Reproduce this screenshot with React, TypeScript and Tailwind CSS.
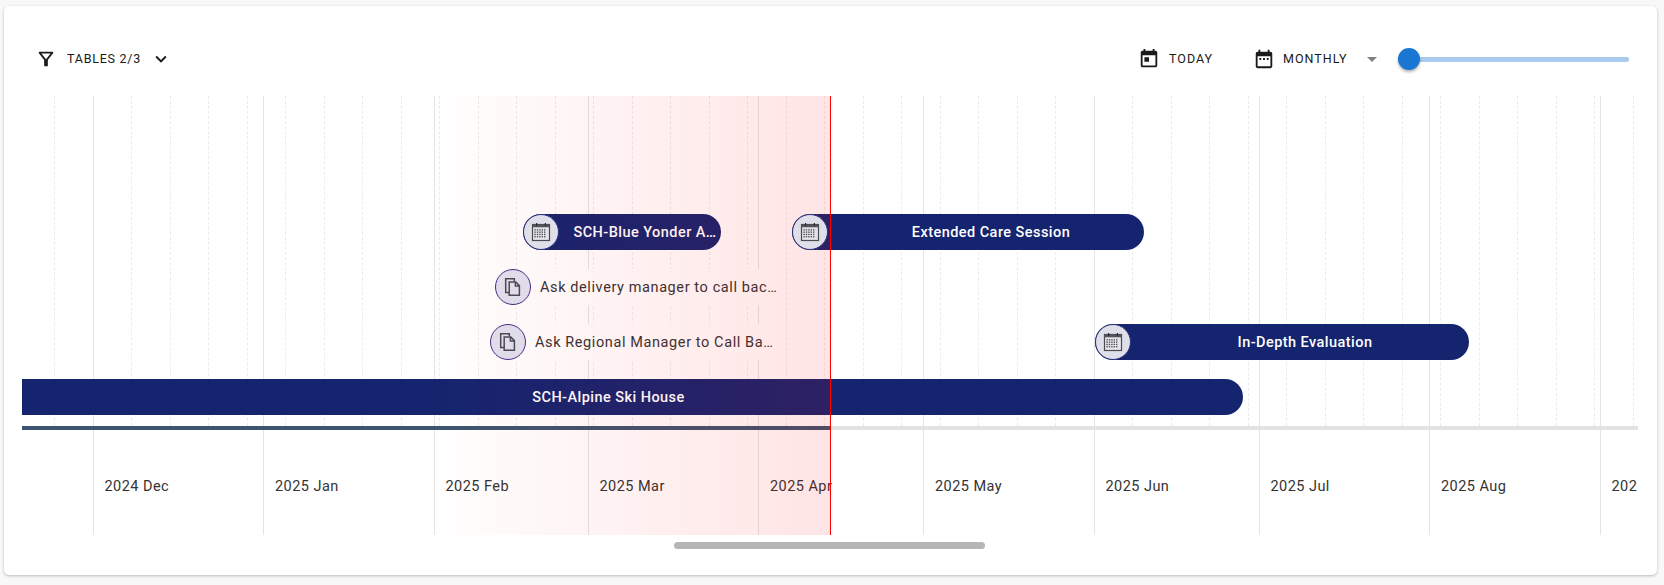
const DAY = 5.5;

const months = [
  { label: '', days: 12.82 },
  { label: '2024 Dec', days: 31 },
  { label: '2025 Jan', days: 31 },
  { label: '2025 Feb', days: 28 },
  { label: '2025 Mar', days: 31 },
  { label: '2025 Apr', days: 30 },
  { label: '2025 May', days: 31 },
  { label: '2025 Jun', days: 30 },
  { label: '2025 Jul', days: 31 },
  { label: '2025 Aug', days: 31 },
  { label: '202', days: 30 },
];

const weekLines = Array.from({ length: 42 }, (_, i) => 32 + i * 38.5);

function CalendarGlyph() {
  const dots = [];
  for (let row = 0; row < 4; row++) {
    for (let col = 0; col < 5; col++) {
      dots.push(<rect key={`${row}-${col}`} x={3.4 + col * 2.4} y={7.2 + row * 2.3} width="1.4" height="1.3" fill="#4a4a52" />);
    }
  }
  return (
    <svg width="20" height="20" viewBox="0 0 20 20" fill="none">
      <rect x="1.5" y="2.5" width="17" height="16" fill="#e4e4ea" stroke="#4a4a50" strokeWidth="1.2" />
      <rect x="1.5" y="2.5" width="17" height="2.8" fill="#55555c" />
      <rect x="5" y="1" width="1.2" height="3" fill="#2c2c30" />
      <rect x="13.8" y="1" width="1.2" height="3" fill="#2c2c30" />
      {dots}
    </svg>
  );
}

function PagesGlyph() {
  return (
    <svg width="18" height="20" viewBox="0 0 18 20" fill="none" stroke="#4c4854" strokeWidth="1.5">
      <path d="M5 15.5H1.7V1.7h8.6v2.6" />
      <path d="M5.2 5h6.6l3.6 3.6v9.7H5.2z" fill="#e0dcea" />
      <path d="M11.4 5v4h4" />
    </svg>
  );
}

function Bar({ title, icon, className }: { title: string; icon?: boolean; className: string }) {
  return (
    <div className={`absolute h-[36px] flex items-center bg-[#15246f] text-white ${className}`}>
      {icon && (
        <span className="relative z-20 w-[36px] h-[36px] shrink-0 rounded-full border border-[#2b2f7c] bg-[#dfdfe9] flex items-center justify-center">
          <CalendarGlyph />
        </span>
      )}
      <span className="flex-1 min-w-0 pl-[14px] pr-1 pt-px text-center whitespace-nowrap text-[14.5px] font-medium tracking-[0.45px]">{title}</span>
    </div>
  );
}

function Task({ title, className }: { title: string; className: string }) {
  return (
    <div className={`absolute h-[36px] flex items-center gap-[9px] bg-white rounded-full ${className}`}>
      <span className="relative z-20 w-[36px] h-[36px] shrink-0 rounded-full border border-[#4b2a86] bg-[#e0dcea] flex items-center justify-center">
        <PagesGlyph />
      </span>
      <span className="flex-1 min-w-0 pt-px whitespace-nowrap text-[14.5px] tracking-[0.6px] text-[#333333]">{title}</span>
    </div>
  );
}

export default function App() {
  let x = 0;
  const monthLines = months.slice(1).map((_, i) => {
    x += months[i].days * DAY;
    return x;
  });

  return (
    <div className="w-[1664px] h-[585px] bg-[#f8f8f8] pt-[6px] pl-[4px] overflow-hidden font-['Roboto',sans-serif]">
      <div className="w-[1653px] h-[569px] bg-white rounded-[5px] shadow-[0_1px_3px_rgba(0,0,0,0.25)] flex flex-col">
        {/* Toolbar */}
        <div className="h-[90px] shrink-0 flex items-center justify-between pl-[31px] pr-[28px] pt-[16px] text-[12.5px] tracking-[0.75px] text-[#1a1a1a]">
          <div className="flex items-center">
            <svg width="22" height="22" viewBox="0 0 24 24" fill="#1a1a1a">
              <path d="M7 6h10l-5.01 6.3L7 6zm-2.75-.39C6.27 8.2 10 13 10 13v6c0 .55.45 1 1 1h2c.55 0 1-.45 1-1v-6s3.72-4.8 5.74-7.39c.51-.66.04-1.61-.79-1.61H5.04c-.83 0-1.3.95-.79 1.61z" />
            </svg>
            <span className="ml-[10px] w-[74px] whitespace-nowrap">TABLES 2/3</span>
            <svg className="ml-[9px]" width="22" height="22" viewBox="0 0 24 24" fill="#1a1a1a">
              <path d="M16.59 8.59 12 13.17 7.41 8.59 6 10l6 6 6-6z" />
            </svg>
          </div>
          <div className="flex items-center">
            <svg width="22" height="22" viewBox="0 0 24 24" fill="#1a1a1a">
              <path d="M19 3h-1V1h-2v2H8V1H6v2H5c-1.11 0-1.99.9-1.99 2L3 19c0 1.1.89 2 2 2h14c1.1 0 2-.9 2-2V5c0-1.1-.9-2-2-2zm0 16H5V8h14v11zM7 10h5v5H7z" />
            </svg>
            <span className="ml-[9px] w-[44px] tracking-[1px]">TODAY</span>
            <svg className="ml-[40px]" width="22" height="22" viewBox="0 0 24 24" fill="#1a1a1a">
              <path d="M9 11H7v2h2v-2zm4 0h-2v2h2v-2zm4 0h-2v2h2v-2zm2-7h-1V2h-2v2H8V2H6v2H5c-1.11 0-1.99.9-1.99 2L3 20c0 1.1.89 2 2 2h14c1.1 0 2-.9 2-2V6c0-1.1-.9-2-2-2zm0 16H5V9h14v11z" />
            </svg>
            <span className="ml-[8px] w-[65px] tracking-[1px] whitespace-nowrap">MONTHLY</span>
            <span className="ml-[19px] w-0 h-0 border-x-[5px] border-x-transparent border-t-[5px] border-t-[#808080]" />
            <div className="ml-[21px] relative w-[231px] h-[22px] flex items-center">
              <div className="w-full h-[5px] rounded-full bg-[#a9cbee]" />
              <div className="absolute left-0 top-0 w-[22px] h-[22px] rounded-full bg-[#1976d2] shadow-[0_2px_3px_rgba(0,0,0,0.3)]" />
            </div>
          </div>
        </div>

        {/* Timeline */}
        <div className="relative ml-[18px] w-[1616px] h-[439px] shrink-0 overflow-hidden">
          <div className="relative h-[330px]">
            {weekLines.map((left) => (
              <div key={left} className="absolute top-0 bottom-0 border-l border-dashed border-[#ececec]" style={{ left }} />
            ))}
            {monthLines.map((left) => (
              <div key={left} className="absolute top-0 bottom-0 border-l border-[#e4e4e4]" style={{ left }} />
            ))}
            <Bar title="SCH-Blue Yonder A…" icon className="left-[501px] top-[118px] w-[198px] rounded-full" />
            <Bar title="Extended Care Session" icon className="left-[770px] top-[118px] w-[352px] rounded-full" />
            <Task title="Ask delivery manager to call bac…" className="left-[473px] top-[173px] w-[283px]" />
            <Task title="Ask Regional Manager to Call Ba…" className="left-[468px] top-[228px] w-[285px]" />
            <Bar title="In-Depth Evaluation" icon className="left-[1073px] top-[228px] w-[374px] rounded-full" />
            <Bar title="SCH-Alpine Ski House" className="left-[-58px] top-[283px] w-[1279px] rounded-full" />
          </div>

          <div className="flex h-[4px] bg-[#e2e2e2]">
            <div className="w-[808px] bg-[#3d5570]" />
          </div>

          <div className="flex h-[105px]">
            {months.map((m, i) => (
              <div
                key={i}
                className={`shrink-0 flex items-center pt-[8px] pl-[11px] whitespace-nowrap text-[14.5px] tracking-[0.45px] text-[#333333] ${i > 0 ? 'border-l border-[#e4e4e4]' : ''}`}
                style={{ width: m.days * DAY }}
              >
                {m.label}
              </div>
            ))}
          </div>

          {/* Past range overlay and today marker */}
          <div className="absolute z-10 left-[400px] top-0 bottom-0 w-[408px] pointer-events-none bg-gradient-to-r from-[rgba(255,0,0,0)] to-[rgba(255,0,0,0.105)]" />
          <div className="absolute z-30 left-[808px] top-0 bottom-0 w-px bg-[#ff0000]" />
        </div>

        {/* Scrollbar */}
        <div className="mt-[7px] ml-[670px] w-[311px] h-[7px] rounded-full bg-[#b6b6b6]" />
      </div>
    </div>
  );
}
